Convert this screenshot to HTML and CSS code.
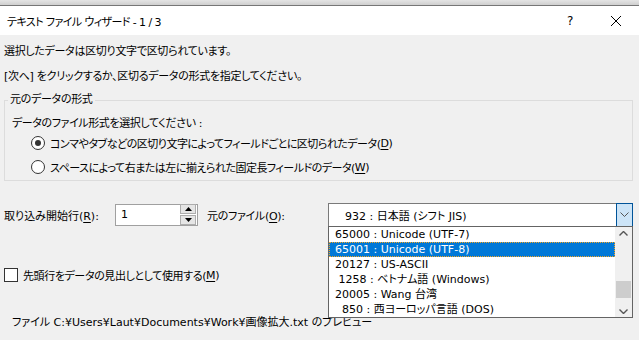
FILE: index.html
```html
<!DOCTYPE html>
<html lang="ja">
<head>
  <meta charset="UTF-8">
  <title>テキスト ファイル ウィザード</title>
  <link rel="stylesheet" href="styles.css">
</head>
<body>

  <div class="frame-top"></div>

  <div class="titlebar">
    <span class="title">テキスト ファイル ウィザード - 1 / 3</span>
    <span class="help">?</span>
    <span class="close">
      <svg width="12" height="12" viewBox="0 0 12 12"><path d="M1 1 L11 11 M11 1 L1 11" stroke="#000" stroke-width="1" fill="none"/></svg>
    </span>
  </div>

  <div class="content">
    <p class="msg first">選択したデータは区切り文字で区切られています。</p>
    <p class="msg">[次へ] をクリックするか、区切るデータの形式を指定してください。</p>

    <fieldset class="group">
      <legend>元のデータの形式</legend>
      <p class="prompt">データのファイル形式を選択してください :</p>
      <label class="option"><span class="radio checked"></span>コンマやタブなどの区切り文字によってフィールドごとに区切られたデータ(<u>D</u>)</label>
      <label class="option"><span class="radio"></span>スペースによって右または左に揃えられた固定長フィールドのデータ(<u>W</u>)</label>
    </fieldset>

    <div class="import-row">
      <span class="label-start">取り込み開始行(<u>R</u>):</span>
      <div class="spin">
        <span class="spin-value">1</span>
        <div class="spin-buttons">
          <span class="spin-btn"><svg width="7" height="4" viewBox="0 0 7 4"><path d="M0 4 L3.5 0 L7 4 Z" fill="#000"/></svg></span>
          <span class="spin-btn"><svg width="7" height="4" viewBox="0 0 7 4"><path d="M0 0 L3.5 4 L7 0 Z" fill="#000"/></svg></span>
        </div>
      </div>
      <span class="label-origin">元のファイル(<u>O</u>):</span>
      <div class="combo">
        <div class="combo-box">
          <span class="combo-text">  932 : 日本語 (シフト JIS)</span>
          <span class="combo-btn"><svg width="9" height="5" viewBox="0 0 9 5"><path d="M0.5 0.5 L4.5 4.5 L8.5 0.5" stroke="#555" fill="none"/></svg></span>
        </div>
        <div class="dropdown">
          <ul class="items">
            <li>65000 : Unicode (UTF-7)</li>
            <li class="selected">65001 : Unicode (UTF-8)</li>
            <li>20127 : US-ASCII</li>
            <li> 1258 : ベトナム語 (Windows)</li>
            <li>20005 : Wang 台湾</li>
            <li>  850 : 西ヨーロッパ言語 (DOS)</li>
          </ul>
          <div class="scrollbar">
            <svg width="9" height="5" viewBox="0 0 9 5"><path d="M0.5 4.5 L4.5 0.5 L8.5 4.5" stroke="#555" stroke-width="1.4" fill="none"/></svg>
            <div class="track"><div class="thumb"></div></div>
            <svg width="9" height="5" viewBox="0 0 9 5"><path d="M0.5 0.5 L4.5 4.5 L8.5 0.5" stroke="#555" stroke-width="1.4" fill="none"/></svg>
          </div>
        </div>
      </div>
    </div>

    <label class="check-row"><span class="checkbox"></span>先頭行をデータの見出しとして使用する(<u>M</u>)</label>

    <p class="preview">ファイル C:¥Users¥Laut¥Documents¥Work¥画像拡大.txt のプレビュー</p>
  </div>

</body>
</html>
```

FILE: styles.css
```css
body {
  margin: 0;
  width: 639px;
  height: 340px;
  overflow: hidden;
  background-color: #f0f0f0;
  font-family: "DejaVu Sans", "Noto Sans CJK JP", sans-serif;
  font-size: 11px;
  font-feature-settings: "palt";
  color: #000;
}

u {
  text-underline-offset: 2px;
}

.frame-top {
  height: 5px;
  background: linear-gradient(#e4e4e4, #cfcfcf);
  border-bottom: 1px solid #767676;
}

.titlebar {
  display: flex;
  align-items: center;
  height: 29px;
  padding-left: 7px;
  background-color: #fff;
}

.title {
  flex: 1;
  letter-spacing: -0.6px;
}

.help {
  width: 12px;
  margin-right: 31px;
  font-size: 12px;
}

.close {
  display: flex;
  margin-right: 17px;
}

.content {
  padding: 0 6px 0 4px;
}

.msg {
  margin: 9px 0 0;
  line-height: 16px;
  letter-spacing: -0.3px;
}

.group {
  margin: 7px 0 0;
  padding: 0 0 3px 3px;
  border: 1px solid #dcdcdc;
  min-inline-size: 0;
}

.group legend {
  padding: 0 2px;
  line-height: 16px;
  letter-spacing: -0.3px;
}

.prompt {
  margin: 8px 0 0 4px;
  line-height: 16px;
  letter-spacing: -0.4px;
}

.option {
  display: flex;
  align-items: center;
  height: 20px;
  margin-top: 4px;
  padding-left: 23px;
  letter-spacing: -0.5px;
}

.option:first-of-type {
  margin-top: 1px;
}

.radio {
  display: flex;
  align-items: center;
  justify-content: center;
  width: 12px;
  height: 12px;
  margin-right: 5px;
  border: 1px solid #333;
  border-radius: 50%;
  background-color: #fff;
}

.radio.checked::after {
  content: "";
  width: 6px;
  height: 6px;
  border-radius: 50%;
  background-color: #333;
}

.import-row {
  display: flex;
  align-items: center;
  height: 23px;
  margin-top: 22px;
}

.label-start {
  width: 111px;
}

.spin {
  display: flex;
  align-items: center;
  justify-content: space-between;
  box-sizing: border-box;
  width: 83px;
  height: 22px;
  padding: 0 1px 0 5px;
  border: 1px solid #a0a0a0;
  background-color: #fff;
}

.spin-buttons {
  display: flex;
  flex-direction: column;
  gap: 1px;
}

.spin-btn {
  display: flex;
  align-items: center;
  justify-content: center;
  width: 14px;
  height: 8px;
  border: 1px solid #adadad;
  background-color: #e5e5e5;
}

.label-origin {
  width: 121px;
  margin-left: 9px;
  letter-spacing: -0.3px;
}

.combo {
  position: relative;
  width: 305px;
}

.combo-box {
  display: flex;
  align-items: center;
  justify-content: space-between;
  box-sizing: border-box;
  height: 24px;
  padding-left: 9px;
  border: 1px solid #7a7a7a;
  background-color: #fff;
  white-space: pre;
}

.combo-btn {
  display: flex;
  align-items: center;
  justify-content: center;
  box-sizing: border-box;
  width: 17px;
  height: 24px;
  margin-right: -1px;
  border: 1px solid #005499;
  background-color: #cce4f7;
}

.dropdown {
  position: absolute;
  top: 23px;
  left: 0;
  right: 0;
  display: flex;
  height: 90px;
  border: 1px solid #646464;
  background-color: #fff;
}

.items {
  flex: 1;
  margin: 0;
  padding: 0;
  list-style: none;
}

.items li {
  height: 15px;
  line-height: 15px;
  padding-left: 6px;
  white-space: pre;
}

.items li.selected {
  background-color: #0078d7;
  color: #fff;
  outline: 1px dotted #f5a623;
  outline-offset: -1px;
}

.scrollbar {
  display: flex;
  flex-direction: column;
  align-items: center;
  width: 17px;
  padding: 4px 0 3px;
  box-sizing: border-box;
  background-color: #f0f0f0;
}

.track {
  flex: 1;
  width: 100%;
  padding-top: 45px;
  box-sizing: border-box;
}

.thumb {
  height: 17px;
  margin: 0 1px;
  background-color: #cdcdcd;
}

.check-row {
  display: flex;
  align-items: center;
  height: 16px;
  margin-top: 41px;
  letter-spacing: -0.4px;
}

.checkbox {
  width: 12px;
  height: 12px;
  margin-right: 5px;
  border: 1px solid #333;
  background-color: #fff;
}

.preview {
  margin: 32px 0 0 8px;
  line-height: 16px;
}
```
